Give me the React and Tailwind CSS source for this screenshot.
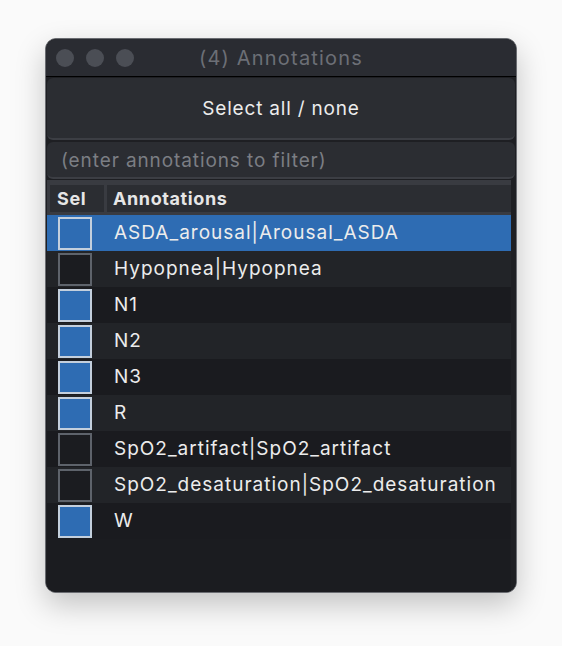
import React from "react";

const rows = [
  { name: "ASDA_arousal|Arousal_ASDA", on: true },
  { name: "Hypopnea|Hypopnea", on: false },
  { name: "N1", on: true },
  { name: "N2", on: true },
  { name: "N3", on: true },
  { name: "R", on: true },
  { name: "SpO2_artifact|SpO2_artifact", on: false },
  { name: "SpO2_desaturation|SpO2_desaturation", on: false },
  { name: "W", on: true },
];

export default function App() {
  return (
    <div
      className="w-[562px] h-[646px] bg-[#fafafa] pt-[38px] pl-[45px]"
      style={{ fontFamily: "Inter, 'Noto Sans', sans-serif" }}
    >
      <div className="w-[472px] h-[555px] rounded-[11px] border border-[#6a6c71] bg-[#1b1c20] overflow-hidden shadow-[0_12px_30px_rgba(0,0,0,0.22)] flex flex-col">
        {/* title bar */}
        <div className="h-[38px] shrink-0 bg-[#2a2c32] border-b border-black flex items-center relative">
          <div className="flex gap-[12px] pl-[10px]">
            <span className="w-[18px] h-[18px] rounded-full bg-[#4b4e55]" />
            <span className="w-[18px] h-[18px] rounded-full bg-[#4b4e55]" />
            <span className="w-[18px] h-[18px] rounded-full bg-[#4b4e55]" />
          </div>
          <div className="absolute inset-0 flex items-center justify-center text-[20px] tracking-[1.2px] text-[#6c6f76]">
            (4) Annotations
          </div>
        </div>

        <div className="flex-1 flex flex-col bg-[#1e1f23]">
          {/* select all button */}
          <div className="h-[62px] shrink-0 mx-[1px] mt-[1px] rounded-[6px] bg-[#2b2d32] border-b-[2px] border-[#3c3e44] flex items-center justify-center pt-[3px] text-[19px] tracking-[0.8px] text-[#ececec]">
            Select all / none
          </div>

          {/* filter */}
          <div className="h-[37px] shrink-0 mx-[1px] mt-[2px] rounded-[6px] bg-[#2b2d32] border-b-[2px] border-[#3c3e44] flex items-center pl-[14px] pt-[3px] text-[19px] tracking-[0.9px] text-[#7b7e84]">
            (enter annotations to filter)
          </div>

          {/* table */}
          <div className="flex-1 flex flex-col bg-[#1b1c20] mt-[1px] mx-[1px] mr-[5px] border-t-[5px] border-[#393b41]">
            <div className="h-[30px] shrink-0 flex bg-[#393b41] pl-[3px] pb-[3px] gap-[3px]">
              <div className="w-[54px] bg-[#2b2d32] flex items-center pl-[7px] text-[18px] tracking-[0.6px] font-bold text-[#e6e6e6]">
                Sel
              </div>
              <div className="flex-1 bg-[#2b2d32] flex items-center pl-[6px] text-[18px] tracking-[0.6px] font-bold text-[#e6e6e6]">
                Annotations
              </div>
            </div>
            {rows.map((r, i) => (
              <div
                key={r.name}
                className={
                  "h-[36px] flex items-center " +
                  (i === 0 ? "bg-[#2e6cb3]" : i % 2 === 1 ? "bg-[#222428]" : "bg-[#1a1b1f]")
                }
              >
                <div className="w-[67px] shrink-0 flex items-center pl-[11px]">
                  <span
                    className={
                      "w-[34px] h-[33px] border-[2px] " +
                      (r.on ? "bg-[#2e6cb3] border-[#c3cfdd]" : "bg-[#1b1c20] border-[#5e636b]")
                    }
                  />
                </div>
                <span className="text-[19px] tracking-[1px] text-[#ececec] whitespace-nowrap pt-[1px]">
                  {r.name}
                </span>
              </div>
            ))}
          </div>
        </div>
      </div>
    </div>
  );
}
